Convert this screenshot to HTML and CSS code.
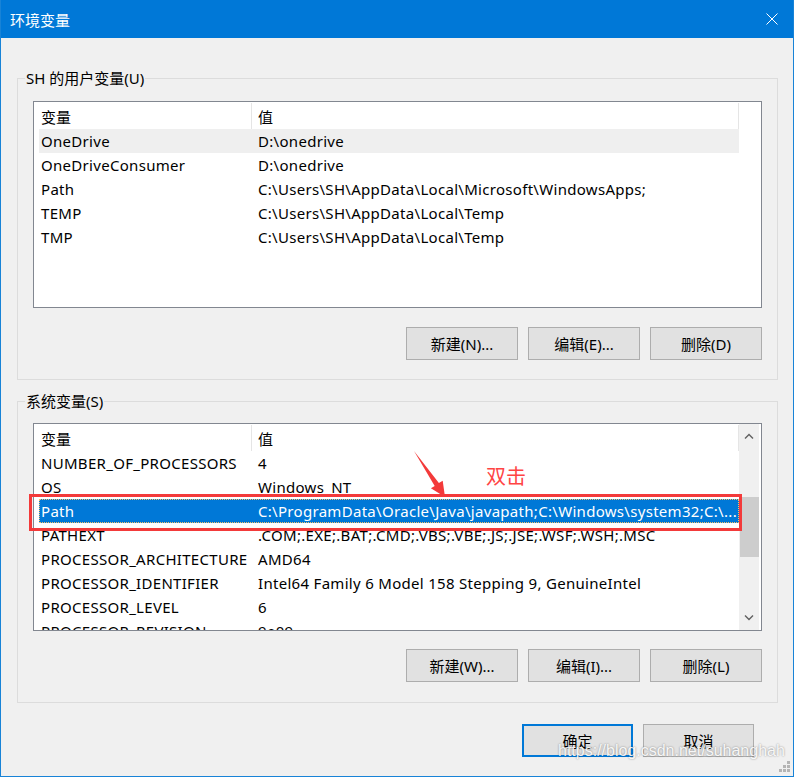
FILE: index.html
```html
<!DOCTYPE html>
<html lang="zh-CN">
<head>
  <meta charset="UTF-8">
  <title>环境变量</title>
  <link rel="stylesheet" href="styles.css">
</head>
<body>
  <div class="window">
    <div class="titlebar">
      <span class="title">环境变量</span>
      <svg class="close" width="12" height="12" viewBox="0 0 12 12">
        <path d="M0.5 0.5 L11.5 11.5 M11.5 0.5 L0.5 11.5" stroke="#fff" stroke-width="1" fill="none"/>
      </svg>
    </div>

    <div class="content">
      <!-- User variables -->
      <section class="group user">
        <span class="group-title">SH 的用户变量(U)</span>
        <div class="list">
          <div class="list-view">
            <div class="row header"><span>变量</span><span>值</span></div>
            <div class="row hot"><span>OneDrive</span><span>D:\onedrive</span></div>
            <div class="row"><span>OneDriveConsumer</span><span>D:\onedrive</span></div>
            <div class="row"><span>Path</span><span>C:\Users\SH\AppData\Local\Microsoft\WindowsApps;</span></div>
            <div class="row"><span>TEMP</span><span>C:\Users\SH\AppData\Local\Temp</span></div>
            <div class="row"><span>TMP</span><span>C:\Users\SH\AppData\Local\Temp</span></div>
          </div>
        </div>
        <div class="actions">
          <button class="btn">新建(N)...</button>
          <button class="btn">编辑(E)...</button>
          <button class="btn">删除(D)</button>
        </div>
      </section>

      <!-- System variables -->
      <section class="group system">
        <span class="group-title">系统变量(S)</span>
        <div class="list">
          <div class="list-view">
            <div class="row header"><span>变量</span><span>值</span></div>
            <div class="row"><span>NUMBER_OF_PROCESSORS</span><span>4</span></div>
            <div class="row"><span>OS</span><span>Windows_NT</span></div>
            <div class="row selected"><span>Path</span><span>C:\ProgramData\Oracle\Java\javapath;C:\Windows\system32;C:\...</span></div>
            <div class="row"><span>PATHEXT</span><span>.COM;.EXE;.BAT;.CMD;.VBS;.VBE;.JS;.JSE;.WSF;.WSH;.MSC</span></div>
            <div class="row"><span>PROCESSOR_ARCHITECTURE</span><span>AMD64</span></div>
            <div class="row"><span>PROCESSOR_IDENTIFIER</span><span>Intel64 Family 6 Model 158 Stepping 9, GenuineIntel</span></div>
            <div class="row"><span>PROCESSOR_LEVEL</span><span>6</span></div>
            <div class="row"><span>PROCESSOR_REVISION</span><span>9e09</span></div>
          </div>
          <div class="scrollbar">
            <div class="scroll-btn">
              <svg width="10" height="6" viewBox="0 0 10 6"><path d="M1 5.5 L5 1.5 L9 5.5" stroke="#606060" stroke-width="1.4" fill="none"/></svg>
            </div>
            <div class="track"><div class="thumb"></div></div>
            <div class="scroll-btn">
              <svg width="10" height="6" viewBox="0 0 10 6"><path d="M1 0.5 L5 4.5 L9 0.5" stroke="#606060" stroke-width="1.4" fill="none"/></svg>
            </div>
          </div>
        </div>
        <div class="actions">
          <button class="btn">新建(W)...</button>
          <button class="btn">编辑(I)...</button>
          <button class="btn">删除(L)</button>
        </div>
      </section>

      <div class="dialog-actions">
        <button class="btn default">确定</button>
        <button class="btn">取消</button>
      </div>
    </div>

    <!-- red markup drawn over the dialog -->
    <div class="mark-box"></div>
    <svg class="mark-arrow" width="40" height="56" viewBox="0 0 40 56">
      <polygon points="4,4 28.9,36.1 32.7,33.7 35,50 20.9,41.3 24.7,38.9" fill="#f33a3a"/>
    </svg>
    <span class="mark-text">双击</span>

    <span class="watermark">https://blog.csdn.net/suhanghah</span>
    <svg class="grip" width="12" height="12" viewBox="0 0 12 12">
      <rect x="8" y="0" width="3" height="3"/>
      <rect x="4" y="4" width="3" height="3"/>
      <rect x="8" y="4" width="3" height="3"/>
      <rect x="0" y="8" width="3" height="3"/>
      <rect x="4" y="8" width="3" height="3"/>
      <rect x="8" y="8" width="3" height="3"/>
    </svg>
  </div>
</body>
</html>
```

FILE: styles.css
```css
* {
    box-sizing: border-box;
}

body {
    margin: 0;
    background: #f0f0f0;
    font-family: "Noto Sans", "Noto Sans CJK SC", sans-serif;
    font-size: 15px;
    color: #000;
}

/* Window frame */
.window {
    position: relative;
    width: 794px;
    height: 777px;
    border: 1px solid #1883d7;
    border-top: none;
    background: #f0f0f0;
    overflow: hidden;
}

.titlebar {
    height: 38px;
    background: #0078d7;
    color: #fff;
    display: flex;
    align-items: center;
    justify-content: space-between;
    padding: 0 15px 0 9px;
}

.title {
    font-family: "Noto Sans CJK SC", sans-serif;
    font-size: 15px;
}

.content {
    padding: 40px 15px 0 16px;
}

/* Group boxes */
.group {
    position: relative;
    border: 1px solid #dcdcdc;
    padding: 22px 15px 19px;
}

.group.system {
    margin-top: 21px;
    padding: 21px 15px 20px;
}

.group-title {
    position: absolute;
    top: -11px;
    left: 7px;
    padding: 0 1px;
    line-height: 20px;
    background: #f0f0f0;
}

/* List view */
.list {
    height: 207px;
    border: 1px solid #828790;
    background: #fff;
    display: flex;
    padding-left: 5px;
    overflow: hidden;
}

.system .list {
    height: 208px;
}

.list-view {
    width: 700px;
    flex: none;
}

.row {
    display: grid;
    grid-template-columns: 213px 487px;
    height: 24px;
    line-height: 24px;
    letter-spacing: 0.3px;
    white-space: nowrap;
}

.row span {
    overflow: hidden;
    padding-left: 2px;
}

.row span + span {
    padding-left: 6px;
}

.row.header {
    height: 27px;
    padding-top: 1px;
    letter-spacing: 0;
}

.row.header span {
    height: 26px;
    line-height: 28px;
    border-right: 1px solid #e5e5e5;
}

.row.hot {
    background: #efefef;
}

.row.selected {
    background: #0078d7;
    color: #fff;
    outline: 1px dotted #f6c16b;
    outline-offset: -1px;
}

/* Vertical scrollbar */
.scrollbar {
    width: 20px;
    flex: none;
    background: #f0f0f0;
    display: flex;
    flex-direction: column;
}

.scroll-btn {
    height: 24px;
    display: flex;
    align-items: center;
    justify-content: center;
    flex: none;
}

.track {
    flex: 1;
}

.thumb {
    margin: 49px 0 0 1px;
    height: 60px;
    background: #cdcdcd;
}

/* Buttons */
.actions {
    display: flex;
    justify-content: flex-end;
    gap: 10px;
    margin-top: 19px;
}

.system .actions {
    margin-top: 18px;
}

.btn {
    width: 112px;
    height: 33px;
    padding: 0;
    border: 1px solid #adadad;
    background: #e1e1e1;
    font: inherit;
    color: #000;
}

.dialog-actions {
    display: flex;
    justify-content: flex-end;
    gap: 10px;
    margin-top: 21px;
    padding-right: 24px;
}

.dialog-actions .btn {
    width: 111px;
}

.btn.default {
    border: 2px solid #0078d7;
}

/* Red markup */
.mark-box {
    position: absolute;
    left: 28px;
    top: 494px;
    width: 713px;
    height: 37px;
    border: 3px solid #f33a3a;
}

.mark-arrow {
    position: absolute;
    left: 409px;
    top: 447px;
}

.mark-text {
    position: absolute;
    left: 485px;
    top: 464px;
    font-family: "Noto Sans CJK SC", sans-serif;
    font-size: 20px;
    line-height: 24px;
    color: #f44;
}

.watermark {
    position: absolute;
    left: 557px;
    top: 742px;
    font-family: "Liberation Sans", sans-serif;
    font-size: 16px;
    line-height: 18px;
    color: rgba(255, 255, 255, 0.92);
    text-shadow: 0 0 2px rgba(0, 0, 0, 0.45);
}

.grip {
    position: absolute;
    right: 2px;
    bottom: 3px;
    fill: #b4b4b4;
}
```
